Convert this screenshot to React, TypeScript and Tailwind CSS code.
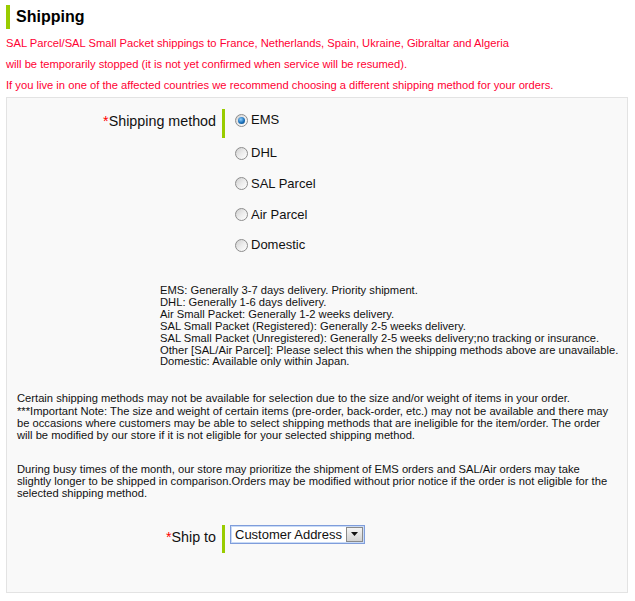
import React from "react";

function Radio({ checked, label }: { checked?: boolean; label: string }) {
  return (
    <div className="flex items-center h-[16px]">
      <span className="relative w-[13px] h-[13px] rounded-full border border-[#8d8d8d] bg-linear-to-br from-[#cfcfcf] via-[#ececec] to-white flex items-center justify-center">
        {checked && (
          <span className="w-[7px] h-[7px] rounded-full bg-[radial-gradient(circle_at_40%_35%,#8fd0ff,#1a6fb8_55%,#0a3f73)]" />
        )}
      </span>
      <span className="ml-[3px] text-[13px] leading-[16px] text-[#111]">{label}</span>
    </div>
  );
}

export default function App() {
  return (
    <div className="w-[635px] h-[601px] bg-white font-['Liberation_Sans',Arial,sans-serif] text-[#111] overflow-hidden">
      <div className="ml-[6px] mt-[5px] h-[24px] border-l-[4px] border-[#99cc00] flex items-center pl-[6px]">
        <span className="text-[16px] font-bold text-black leading-[18px]">Shipping</span>
      </div>
      <div className="mt-[4px] px-[6px] text-[11.2px] leading-[21px] text-[#ff0033]">
        <div>SAL Parcel/SAL Small Packet shippings to France, Netherlands, Spain, Ukraine, Gibraltar and Algeria</div>
        <div>will be temporarily stopped (it is not yet confirmed when service will be resumed).</div>
        <div>If you live in one of the affected countries we recommend choosing a different shipping method for your orders.</div>
      </div>
      <div className="mt-[1px] ml-[6px] w-[622px] h-[496px] border border-[#e3e3e3] bg-[#f9f9f9] pt-[11px]">
        <div className="flex">
          <div className="w-[209px] text-right text-[14.3px] leading-[16px] mt-[4px]">
            <span className="text-[#ff0000]">*</span>Shipping method
          </div>
          <div className="ml-[6px] h-[29px] border-l-[3px] border-[#99cc00] pl-[10px] pt-[3px]">
            <Radio checked label="EMS" />
          </div>
        </div>
        <div className="ml-[228px] mt-[7px] flex flex-col gap-[14.8px]">
          <Radio label="DHL" />
          <Radio label="SAL Parcel" />
          <Radio label="Air Parcel" />
          <Radio label="Domestic" />
        </div>
        <div className="ml-[153px] mt-[32px] text-[11.2px] leading-[11.85px] whitespace-nowrap text-[#111]">
          <div>EMS: Generally 3-7 days delivery. Priority shipment.</div>
          <div>DHL: Generally 1-6 days delivery.</div>
          <div>Air Small Packet: Generally 1-2 weeks delivery.</div>
          <div>SAL Small Packet (Registered): Generally 2-5 weeks delivery.</div>
          <div>SAL Small Packet (Unregistered): Generally 2-5 weeks delivery;no tracking or insurance.</div>
          <div>Other [SAL/Air Parcel]: Please select this when the shipping methods above are unavailable.</div>
          <div>Domestic: Available only within Japan.</div>
        </div>
        <p className="ml-[10px] mt-[24px] w-[595px] text-[11.2px] leading-[12.2px] text-[#111]">
          Certain shipping methods may not be available for selection due to the size and/or weight of items in your order.
          <br />
          ***Important Note: The size and weight of certain items (pre-order, back-order, etc.) may not be available and there may be occasions where customers may be able to select shipping methods that are ineligible for the item/order. The order will be modified by our store if it is not eligible for your selected shipping method.
        </p>
        <p className="ml-[10px] mt-[23px] w-[595px] text-[11.2px] leading-[11.9px] text-[#111]">
          During busy times of the month, our store may prioritize the shipment of EMS orders and SAL/Air orders may take slightly longer to be shipped in comparison.Orders may be modified without prior notice if the order is not eligible for the selected shipping method.
        </p>
        <div className="flex mt-[25px]">
          <div className="w-[209px] text-right text-[14.3px] leading-[16px] mt-[4px]">
            <span className="text-[#ff0000]">*</span>Ship to
          </div>
          <div className="ml-[6px] h-[28px] border-l-[3px] border-[#99cc00] pl-[5px]">
            <div className="w-[135px] h-[19px] border border-[#7f9ddb] bg-white flex items-center justify-between pl-[4px] pr-[1px] shadow-[inset_0_0_0_1px_#c9dbf6]">
              <span className="text-[13px] leading-[15px] text-[#111] whitespace-nowrap">Customer Address</span>
              <span className="w-[17px] h-[15px] border border-[#8a8a8a] bg-linear-to-b from-[#f4f4f4] to-[#d2d2d2] flex items-center justify-center">
                <svg width="7" height="4" viewBox="0 0 7 4">
                  <path d="M0 0 H7 L3.5 4 Z" fill="#111" />
                </svg>
              </span>
            </div>
          </div>
        </div>
      </div>
    </div>
  );
}
